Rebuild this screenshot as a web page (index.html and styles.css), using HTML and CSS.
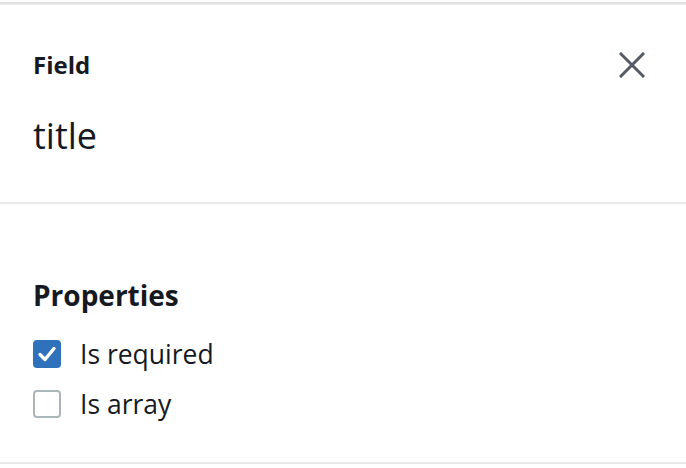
FILE: index.html
```html
<!DOCTYPE html>
<html>
<head>
<meta charset="utf-8">
<link rel="stylesheet" href="styles.css">
</head>
<body>
<div class="panel">
  <div class="header">
    <div class="header-text">
      <div class="label">Field</div>
      <div class="value">title</div>
    </div>
    <button class="close" aria-label="Close">
      <svg width="26" height="26" viewBox="0 0 26 26"><path d="M2 2 L24 24 M24 2 L2 24" stroke="#545b64" stroke-width="3" stroke-linecap="square" fill="none"/></svg>
    </button>
  </div>
  <div class="section">
    <div class="heading">Properties</div>
    <label class="check">
      <span class="box checked"><svg width="28" height="28" viewBox="0 0 28 28"><path d="M7 14.5 L12 19.5 L21 8.5" stroke="#fff" stroke-width="3.4" fill="none" stroke-linecap="round" stroke-linejoin="round"/></svg></span>
      <span class="text">Is required</span>
    </label>
    <label class="check">
      <span class="box"></span>
      <span class="text">Is array</span>
    </label>
  </div>
</div>
</body>
</html>
```
FILE: styles.css
```css
html, body {
  margin: 0;
  padding: 0;
  background: #fff;
}
body {
  font-family: "Open Sans", "Noto Sans", sans-serif;
  color: #16191f;
  width: 686px;
  height: 468px;
  overflow: hidden;
}
.panel {
  margin-top: 2px;
  border-top: 2px solid #e0e0e0;
  box-shadow: inset 0 1px 0 #ececec;
}
.header {
  display: flex;
  justify-content: space-between;
  align-items: flex-start;
  padding: 0 41px 0 33px;
  height: 198px;
  border-bottom: 2px solid #eaeaea;
}
.header-text {
  display: flex;
  flex-direction: column;
}
.label {
  font-size: 24px;
  font-weight: 700;
  line-height: 32px;
  margin-top: 45px;
}
.value {
  font-size: 36px;
  line-height: 48px;
  margin-top: 31px;
}
.close {
  border: 0;
  background: none;
  padding: 0;
  margin-top: 48px;
  width: 26px;
  height: 26px;
  display: flex;
}
.section {
  padding: 0 33px;
  height: 258px;
  border-bottom: 2px solid #eaeaea;
  display: flex;
  flex-direction: column;
}
.heading {
  font-size: 28px;
  font-weight: 700;
  line-height: 36px;
  margin-top: 73px;
  margin-bottom: 27px;
}
.check {
  display: flex;
  align-items: center;
  gap: 19px;
  height: 28px;
  margin-bottom: 22px;
}
.box {
  width: 28px;
  height: 28px;
  box-sizing: border-box;
  border: 2px solid #aab7b8;
  border-radius: 4px;
  display: flex;
  flex: none;
}
.box.checked {
  background: #2f72bb;
  border: 0;
}
.text {
  font-size: 26.5px;
  line-height: 30px;
}
```
